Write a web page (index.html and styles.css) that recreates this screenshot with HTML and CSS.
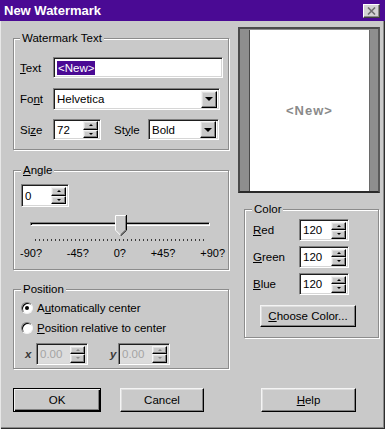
FILE: index.html
```html
<!DOCTYPE html>
<html lang="en">
<head>
    <meta charset="UTF-8">
    <title>New Watermark</title>
    <link rel="stylesheet" href="styles.css">
</head>
<body>
<div class="window">
    <!-- Barre de titre -->
    <div class="titlebar">
        <span class="title">New Watermark</span>
        <span class="close">
            <svg width="9" height="8" viewBox="0 0 9 8"><path d="M1 0.5 L8 7.5 M8 0.5 L1 7.5" stroke="#6e6e6e" stroke-width="1.6"/></svg>
        </span>
    </div>

    <div class="content">
        <div class="cols">
            <div class="col-left">
                <!-- Texte du filigrane -->
                <fieldset class="group group-text">
                    <legend>Watermark Text</legend>
                    <div class="row">
                        <span class="lbl"><u>T</u>ext</span>
                        <div class="field field-text"><span class="sel">&lt;New&gt;</span></div>
                    </div>
                    <div class="row row-font">
                        <span class="lbl">Fo<u>n</u>t</span>
                        <div class="field combo combo-font"><span>Helvetica</span><span class="drop"></span></div>
                    </div>
                    <div class="row row-size">
                        <span class="lbl">Si<u>z</u>e</span>
                        <div class="field spin spin-size"><span>72</span><span class="arrows"><span class="up"></span><span class="down"></span></span></div>
                        <span class="lbl lbl-style">St<u>y</u>le</span>
                        <div class="field combo combo-style"><span>Bold</span><span class="drop"></span></div>
                    </div>
                </fieldset>

                <!-- Angle -->
                <fieldset class="group group-angle">
                    <legend><u>A</u>ngle</legend>
                    <div class="field spin spin-angle"><span>0</span><span class="arrows"><span class="up"></span><span class="down"></span></span></div>
                    <div class="slider">
                        <div class="track"></div>
                        <svg class="thumb" width="12" height="21" viewBox="0 0 12 21">
                            <polygon points="0,0 11,0 11,15 5.5,20.5 0,15" fill="#c9c9c9"/>
                            <polyline points="0.5,15.2 0.5,0.5 10.5,0.5" stroke="#fff" fill="none"/>
                            <line x1="0.5" y1="15.2" x2="5.5" y2="20.2" stroke="#fff"/>
                            <polyline points="10.5,1 10.5,14.8 5.5,19.6" stroke="#808080" fill="none"/>
                            <polyline points="11.5,0 11.5,15.2 5.5,21" stroke="#000" fill="none"/>
                        </svg>
                    </div>
                    <div class="ticks"></div>
                    <div class="scale">
                        <span>-90?</span><span>-45?</span><span>0?</span><span>+45?</span><span>+90?</span>
                    </div>
                </fieldset>

                <!-- Position -->
                <fieldset class="group group-pos">
                    <legend>Position</legend>
                    <div class="radio-row"><span class="radio checked"></span><span>A<u>u</u>tomatically center</span></div>
                    <div class="radio-row"><span class="radio"></span><span><u>P</u>osition relative to center</span></div>
                    <div class="coord-row">
                        <span class="coord coord-x">x</span>
                        <div class="field spin spin-off"><span>0.00</span><span class="arrows"><span class="up"></span><span class="down"></span></span></div>
                        <span class="coord coord-y">y</span>
                        <div class="field spin spin-off"><span>0.00</span><span class="arrows"><span class="up"></span><span class="down"></span></span></div>
                    </div>
                </fieldset>
            </div>

            <div class="col-right">
                <!-- Aperçu -->
                <div class="preview">
                    <div class="page">&lt;New&gt;</div>
                </div>

                <!-- Couleur -->
                <fieldset class="group group-color">
                    <legend>Color</legend>
                    <div class="color-row">
                        <span class="lbl"><u>R</u>ed</span>
                        <div class="field spin spin-color"><span>120</span><span class="arrows"><span class="up"></span><span class="down"></span></span></div>
                    </div>
                    <div class="color-row">
                        <span class="lbl"><u>G</u>reen</span>
                        <div class="field spin spin-color"><span>120</span><span class="arrows"><span class="up"></span><span class="down"></span></span></div>
                    </div>
                    <div class="color-row">
                        <span class="lbl"><u>B</u>lue</span>
                        <div class="field spin spin-color"><span>120</span><span class="arrows"><span class="up"></span><span class="down"></span></span></div>
                    </div>
                    <div class="btn choose"><span><u>C</u>hoose Color...</span></div>
                </fieldset>
            </div>
        </div>

        <!-- Boutons -->
        <div class="buttons">
            <div class="btn btn-ok">OK</div>
            <div class="btn btn-cancel">Cancel</div>
            <div class="btn btn-help"><span><u>H</u>elp</span></div>
        </div>
    </div>
</div>
</body>
</html>
```

FILE: styles.css
```css
/* Styles généraux */
* {
    box-sizing: border-box;
}

body {
    margin: 0;
    font-family: "Liberation Sans", Arial, sans-serif;
    font-size: 11.5px;
    color: #000;
    background: #c9c9c9;
}

.window {
    width: 385px;
    height: 429px;
    background: #c9c9c9;
    box-shadow: inset 1px 0 #e8e8e8, inset -1px -1px #2e2e2e, inset -2px -2px #8a8a8a;
}

/* Barre de titre */
.titlebar {
    height: 21px;
    background: #4a0a94;
    display: flex;
    align-items: center;
    justify-content: space-between;
    padding: 0 5px 0 4px;
}

.title {
    color: #fff;
    font-weight: bold;
    font-size: 13px;
}

.close {
    width: 17px;
    height: 14px;
    display: flex;
    align-items: center;
    justify-content: center;
    background: #d4d4d4;
    border: 1px solid;
    border-color: #fff #404040 #404040 #fff;
    box-shadow: inset -1px -1px #8a8a8a;
}

.content {
    padding: 6px 0 0 13px;
}

.cols {
    display: flex;
    gap: 9px;
    align-items: flex-start;
}

.col-left {
    width: 216px;
    margin-top: 4px;
    display: flex;
    flex-direction: column;
}

.col-right {
    width: 142px;
}

/* Cadres de groupe */
.group {
    margin: 0;
    min-width: 0;
    border: 1px solid #8c8c8c;
    box-shadow: inset 1px 1px #fff, 1px 1px #fff;
}

.group legend {
    padding: 0 2px;
    line-height: 14px;
    background: #c9c9c9;
}

/* Champs creux */
.field {
    height: 21px;
    display: flex;
    align-items: center;
    padding-left: 3px;
    background: #fff;
    border: 1px solid;
    border-color: #808080 #fff #fff #808080;
    box-shadow: inset 1px 1px #1e1e1e, inset -1px -1px #d6d6d6;
}

/* Boutons en relief */
.drop,
.arrows span,
.btn {
    background: #c9c9c9;
    border: 1px solid;
    border-color: #f4f4f4 #000 #000 #f4f4f4;
    box-shadow: inset -1px -1px #808080, inset 1px 1px #dedede;
}

.row {
    display: flex;
    align-items: center;
}

.lbl {
    width: 33px;
}

/* Watermark Text */
.group-text {
    padding: 12px 5px 9px 6px;
}

.field-text {
    width: 170px;
}

.sel {
    background: #4a0a94;
    color: #fff;
    padding: 0 1px;
    line-height: 14px;
}

.row-font {
    margin-top: 10px;
}

.row-size {
    margin-top: 9px;
}

.combo,
.spin {
    justify-content: space-between;
    padding-right: 2px;
}

.combo-font {
    width: 167px;
    height: 22px;
}

.combo-style {
    width: 71px;
}

.drop {
    width: 16px;
    height: 17px;
    display: flex;
    align-items: center;
    justify-content: center;
}

.drop::before {
    content: '';
    border-left: 4px solid transparent;
    border-right: 4px solid transparent;
    border-top: 4px solid #000;
}

.spin-size {
    width: 48px;
}

.lbl-style {
    width: 34px;
    margin-left: 13px;
}

.arrows {
    width: 15px;
    height: 17px;
    display: flex;
    flex-direction: column;
}

.arrows span {
    flex: 1;
    display: flex;
    align-items: center;
    justify-content: center;
}

.arrows .up::before {
    content: '';
    border-left: 2px solid transparent;
    border-right: 2px solid transparent;
    border-bottom: 2px solid #000;
}

.arrows .down::before {
    content: '';
    border-left: 2px solid transparent;
    border-right: 2px solid transparent;
    border-top: 2px solid #000;
}

/* Angle */
.group-angle {
    margin-top: 13px;
    padding: 7px 5px 9px 7px;
}

.spin-angle {
    width: 48px;
    height: 23px;
}

.slider {
    position: relative;
    height: 20px;
    margin-top: 8px;
    padding-top: 7px;
}

.track {
    margin-left: 9px;
    width: 180px;
    height: 4px;
    border: 1px solid;
    border-color: #808080 #fff #fff #808080;
    box-shadow: inset 1px 1px #000;
    background: #c9c9c9;
}

.thumb {
    position: absolute;
    top: 0;
    left: 94px;
}

.ticks {
    margin: 4px 0 0 14px;
    width: 171px;
    height: 2px;
    background: repeating-linear-gradient(to right, #3c3c3c 0 1px, transparent 1px 4px);
}

.scale {
    display: flex;
    justify-content: space-between;
    margin: 5px -2px 0 -1px;
    line-height: 14px;
    font-size: 11px;
}

/* Position */
.group-pos {
    margin-top: 12px;
    padding: 4px 5px 3px 7px;
}

.radio-row {
    display: flex;
    align-items: center;
    gap: 4px;
    height: 16px;
}

.radio-row + .radio-row {
    margin-top: 4px;
}

.radio {
    width: 12px;
    height: 12px;
    border-radius: 50%;
    background: #fff;
    border: 1px solid;
    border-color: #808080 #f4f4f4 #f4f4f4 #808080;
    box-shadow: inset 1px 1px #000;
    display: flex;
    align-items: center;
    justify-content: center;
}

.radio.checked::after {
    content: '';
    width: 4px;
    height: 4px;
    border-radius: 50%;
    background: #000;
}

.coord-row {
    display: flex;
    align-items: center;
    margin-top: 7px;
}

.coord {
    font-style: italic;
    font-weight: bold;
    color: #3a3a3a;
}

.coord-x {
    width: 11px;
    margin-left: 4px;
}

.coord-y {
    width: 8px;
    margin-left: 22px;
}

.spin-off {
    width: 52px;
    height: 22px;
    color: #a4a4a4;
    background: #dcdcdc;
}

.spin-off .arrows span::before {
    border-top-color: #8a8a8a;
    border-bottom-color: #8a8a8a;
}

/* Aperçu */
.preview {
    height: 166px;
    display: flex;
    padding: 1px 8px 0 9px;
    background: #8e8e8e;
    border: 2px solid;
    border-color: #4a4a4a #5a5a5a #2a2a2a #4a4a4a;
}

.page {
    flex: 1;
    height: 161px;
    display: flex;
    align-items: center;
    justify-content: center;
    background: #fff;
    border-left: 1px solid #4a4a4a;
    border-right: 1px solid #6a6a6a;
    color: #8a8a8a;
    font-size: 13px;
    font-weight: bold;
    letter-spacing: 1px;
}

/* Couleur */
.group-color {
    width: 135px;
    margin: 9px 0 0 6px;
    padding: 3px 5px 10px 7px;
}

.color-row {
    display: flex;
    align-items: center;
}

.color-row + .color-row {
    margin-top: 5px;
}

.color-row .lbl {
    width: 46px;
    margin-left: 1px;
}

.spin-color {
    width: 50px;
    height: 22px;
}

.btn {
    display: flex;
    align-items: center;
    justify-content: center;
}

.choose {
    width: 96px;
    height: 22px;
    margin: 10px 0 0 8px;
}

/* Boutons du bas */
.buttons {
    display: flex;
    margin-top: 19px;
}

.buttons .btn {
    height: 24px;
}

.btn-ok {
    width: 88px;
    border-color: #000;
    box-shadow: inset 1px 1px #f4f4f4, inset -1px -1px #000, inset -2px -2px #808080;
}

.btn-cancel {
    width: 84px;
    margin-left: 19px;
}

.btn-help {
    width: 95px;
    margin-left: 57px;
}
```
